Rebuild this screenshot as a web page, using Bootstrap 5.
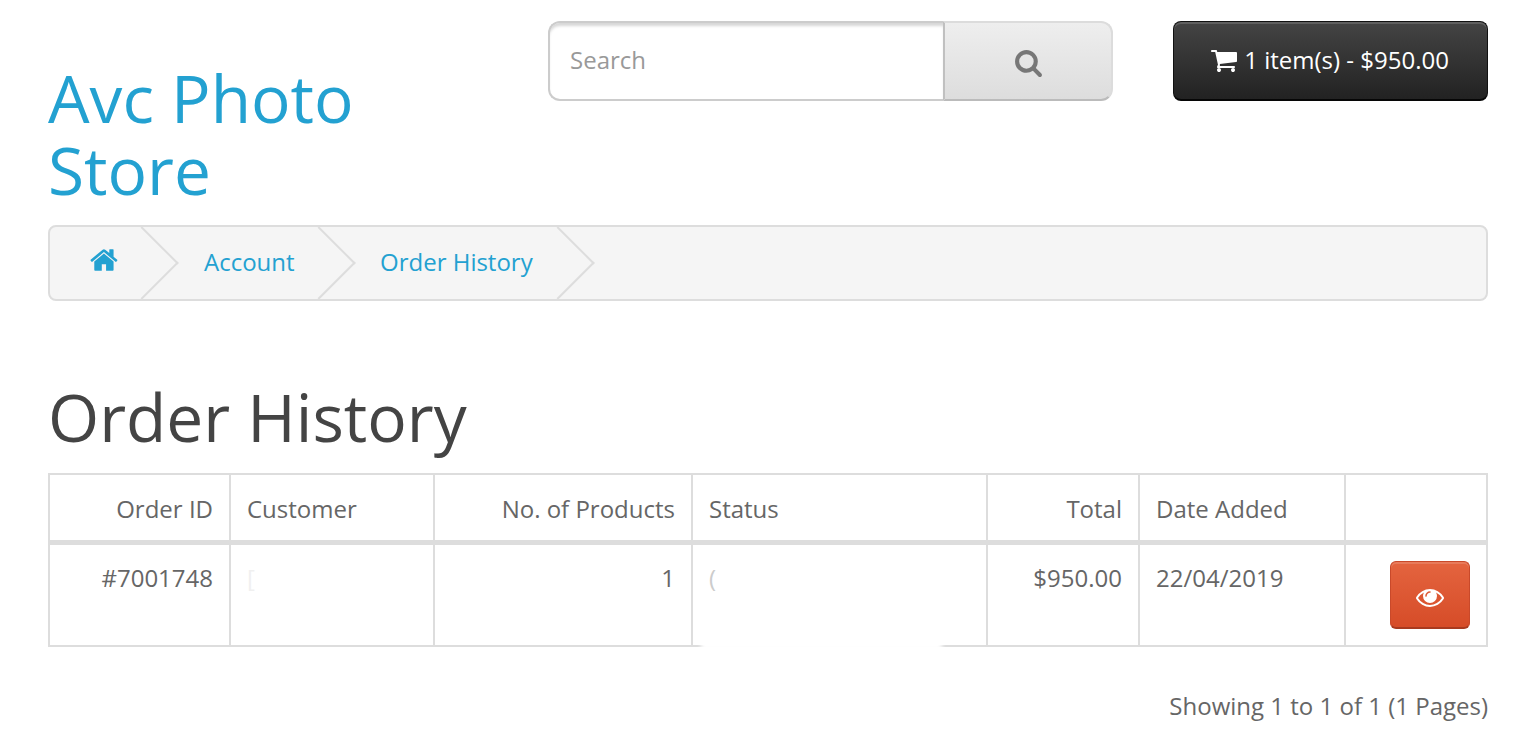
<!DOCTYPE html>
<html lang="en">
<head>
    <meta charset="UTF-8">
    <meta name="viewport" content="width=device-width, initial-scale=1.0">
    <title>Order History</title>
    <link href="https://cdn.jsdelivr.net/npm/bootstrap@5.3.0/dist/css/bootstrap.min.css" rel="stylesheet">
    <style>
        html, body { height: 745px; overflow: hidden; }
        body { font-family: "Open Sans", sans-serif; font-size: 24px; color: #666; background: #fff; }
        a { text-decoration: none; }
        .page-wrap { padding: 21px 40px 0 48px; }
        .head-row { --bs-gutter-x: 60px; height: 204px; }
        .logo-text { font-size: 65.8px; line-height: 72px; font-weight: 400; color: #23a1d1; margin: 41px 0 0; }
        .search-box { height: 80px; }
        .search-input { flex: 1 1 auto; min-width: 0; height: 80px; border: 2px solid #ccc; border-right: 0; border-radius: 12px 0 0 12px; padding: 0 20px 4px; font-size: 24px; color: #999; box-shadow: inset 0 4px 3px -1px rgba(0,0,0,.16); }
        .search-input::placeholder { color: #999; }
        .search-btn { width: 170px; height: 80px; border: 2px solid #dcdcdc; border-left: 2px solid #c0c0c0; border-bottom-color: #bbb; border-radius: 0 12px 12px 0; background: linear-gradient(#eee, #ddd); padding: 0 0 6px 0; }
        .search-btn svg { width: 29px; height: 29px; fill: #777; margin-top: 6px; }
        .cart-btn { height: 80px; border: 1px solid #111; border-bottom: 2px solid #060606; border-radius: 8px; background: linear-gradient(#444, #222); color: #fff; font-size: 24px; padding: 0 14px 2px 12px; box-shadow: inset 0 2px 0 rgba(255,255,255,.15); }
        .cart-btn svg { width: 28px; height: 28px; fill: #fff; margin-top: -5px; }
        .crumb-bar { height: 76px; border: 2px solid #ddd; border-radius: 8px; background: #f5f5f5; overflow: hidden; margin-bottom: 0; }
        .crumb-item { position: relative; height: 72px; }
        .crumb-item a { color: #23a1d1; line-height: 70px; display: block; }
        .crumb-item svg { width: 30px; height: 30px; fill: #23a1d1; margin-top: -10px; }
        .crumb-item::after { content: ""; position: absolute; width: 52px; height: 52px; right: 10px; top: 10px; border-top: 2px solid #ddd; border-right: 2px solid #ddd; transform: rotate(45deg); }
        .crumb-home { width: 128px; padding-left: 40px; }
        .crumb-acct { width: 177px; padding-left: 26px; }
        .crumb-hist { width: 239px; padding-left: 25px; }
        .page-title { font-size: 65.8px; line-height: 80px; font-weight: 400; color: #444; margin: 76px 0 16px; letter-spacing: 0; }
        .order-table { table-layout: fixed; width: 1438px; border-collapse: collapse; margin: 0; --bs-table-color: #666; }
        .order-table td { border: 2px solid #ddd; padding: 16px; font-size: 24px; line-height: 36px; vertical-align: top; }
        .order-table thead td { padding-bottom: 13px; border-bottom-width: 5px; }
        .order-table tbody td { height: 101px; padding-top: 15px; }
        .smudge-cell { position: relative; overflow: visible; }
        .smudge { position: absolute; left: 8px; right: 44px; bottom: -5px; height: 10px; background: #fff; filter: blur(2px); }
        .faint-a { color: #f0f0f0; }
        .faint-b { color: #ccc; }
        .view-btn { display: block; width: 80px; height: 68px; margin: 1px 0 0 28px; padding: 0; border: 1px solid #c9492a; border-bottom: 2px solid #a83a1f; border-radius: 6px; background: linear-gradient(#e4643f, #d64c28); box-shadow: inset 0 2px 0 rgba(255,255,255,.15); }
        .view-btn svg { width: 28px; height: 28px; fill: #fff; }
        .page-count { text-align: right; margin-top: 41px; line-height: 36px; }
    </style>
</head>
<body>
    <div class="page-wrap">
        <div class="row head-row">
            <div class="col-4">
                <h1 class="logo-text">Avc Photo<br>Store</h1>
            </div>
            <div class="col-5">
                <div class="d-flex search-box">
                    <input class="search-input" type="text" placeholder="Search">
                    <button class="search-btn" type="button">
                        <svg viewBox="0 0 1792 1792"><path d="M1216 832q0-185-131.5-316.5t-316.5-131.5-316.5 131.5-131.5 316.5 131.5 316.5 316.5 131.5 316.5-131.5 131.5-316.5zm512 832q0 52-38 90t-90 38q-54 0-90-38l-343-342q-179 124-399 124-143 0-273.5-55.5t-225-150-150-225-55.5-273.5 55.5-273.5 150-225 225-150 273.5-55.5 273.5 55.5 225 150 150 225 55.5 273.5q0 220-124 399l343 343q37 37 37 90z"/></svg>
                    </button>
                </div>
            </div>
            <div class="col-3">
                <button class="cart-btn w-100" type="button">
                    <svg viewBox="0 0 1792 1792"><path d="M704 1536q0 52-38 90t-90 38-90-38-38-90 38-90 90-38 90 38 38 90zm896 0q0 52-38 90t-90 38-90-38-38-90 38-90 90-38 90 38 38 90zm128-1088v512q0 24-16.5 42.5t-40.5 21.5l-1044 122q13 60 13 70 0 16-24 64h920q26 0 45 19t19 45-19 45-45 19h-1024q-26 0-45-19t-19-45q0-11 8-31.5t16-36 21.5-40 15.5-29.5l-177-823h-204q-26 0-45-19t-19-45 19-45 45-19h256q16 0 28.5 6.5t19.5 15.5 13 24.5 8 26 5.5 29.5 4.5 26h1201q26 0 45 19t19 45z"/></svg>
                    1 item(s) - $950.00
                </button>
            </div>
        </div>

        <div class="d-flex crumb-bar">
            <div class="crumb-item crumb-home">
                <a href="#"><svg viewBox="0 0 1792 1792"><path d="M1408 992v480q0 26-19 45t-45 19h-384v-384h-256v384h-384q-26 0-45-19t-19-45v-480q0-1 .5-3t.5-3l575-474 575 474q1 2 1 6zm223-69l-62 74q-8 9-21 11h-3q-13 0-21-7l-692-577-692 577q-12 8-24 7-13-2-21-11l-62-74q-8-10-7-23.5t11-21.5l719-599q32-26 76-26t76 26l244 204v-195q0-14 9-23t23-9h192q14 0 23 9t9 23v408l219 182q10 8 11 21.5t-7 23.5z"/></svg></a>
            </div>
            <div class="crumb-item crumb-acct"><a href="#">Account</a></div>
            <div class="crumb-item crumb-hist"><a href="#">Order History</a></div>
        </div>

        <h1 class="page-title">Order History</h1>

        <table class="order-table">
            <colgroup>
                <col style="width: 181px"><col style="width: 204px"><col style="width: 258px"><col style="width: 295px"><col style="width: 152px"><col style="width: 206px"><col style="width: 142px">
            </colgroup>
            <thead>
                <tr>
                    <td class="text-end">Order ID</td>
                    <td>Customer</td>
                    <td class="text-end">No. of Products</td>
                    <td>Status</td>
                    <td class="text-end">Total</td>
                    <td>Date Added</td>
                    <td></td>
                </tr>
            </thead>
            <tbody>
                <tr>
                    <td class="text-end">#7001748</td>
                    <td class="faint-a">[</td>
                    <td class="text-end">1</td>
                    <td class="smudge-cell faint-b">(<span class="smudge"></span></td>
                    <td class="text-end">$950.00</td>
                    <td>22/04/2019</td>
                    <td>
                        <button class="view-btn" type="button">
                            <svg viewBox="0 0 1792 1792"><path d="M1664 960q-152-236-381-353 61 104 61 225 0 185-131.5 316.5t-316.5 131.5-316.5-131.5-131.5-316.5q0-121 61-225-229 117-381 353 133 205 333.5 326.5t434.5 121.5 434.5-121.5 333.5-326.5zm-720-384q0-20-14-34t-34-14q-125 0-214.5 89.5t-89.5 214.5q0 20 14 34t34 14 34-14 14-34q0-86 61-147t147-61q20 0 34-14t14-34zm848 384q0 34-20 69-140 230-376.5 368.5t-499.5 138.5-499.5-139-376.5-368q-20-35-20-69t20-69q140-229 376.5-368t499.5-139 499.5 139 376.5 368q20 35 20 69z"/></svg>
                        </button>
                    </td>
                </tr>
            </tbody>
        </table>

        <div class="page-count">Showing 1 to 1 of 1 (1 Pages)</div>
    </div>
    <script src="https://cdn.jsdelivr.net/npm/bootstrap@5.3.0/dist/js/bootstrap.bundle.min.js"></script>
</body>
</html>
